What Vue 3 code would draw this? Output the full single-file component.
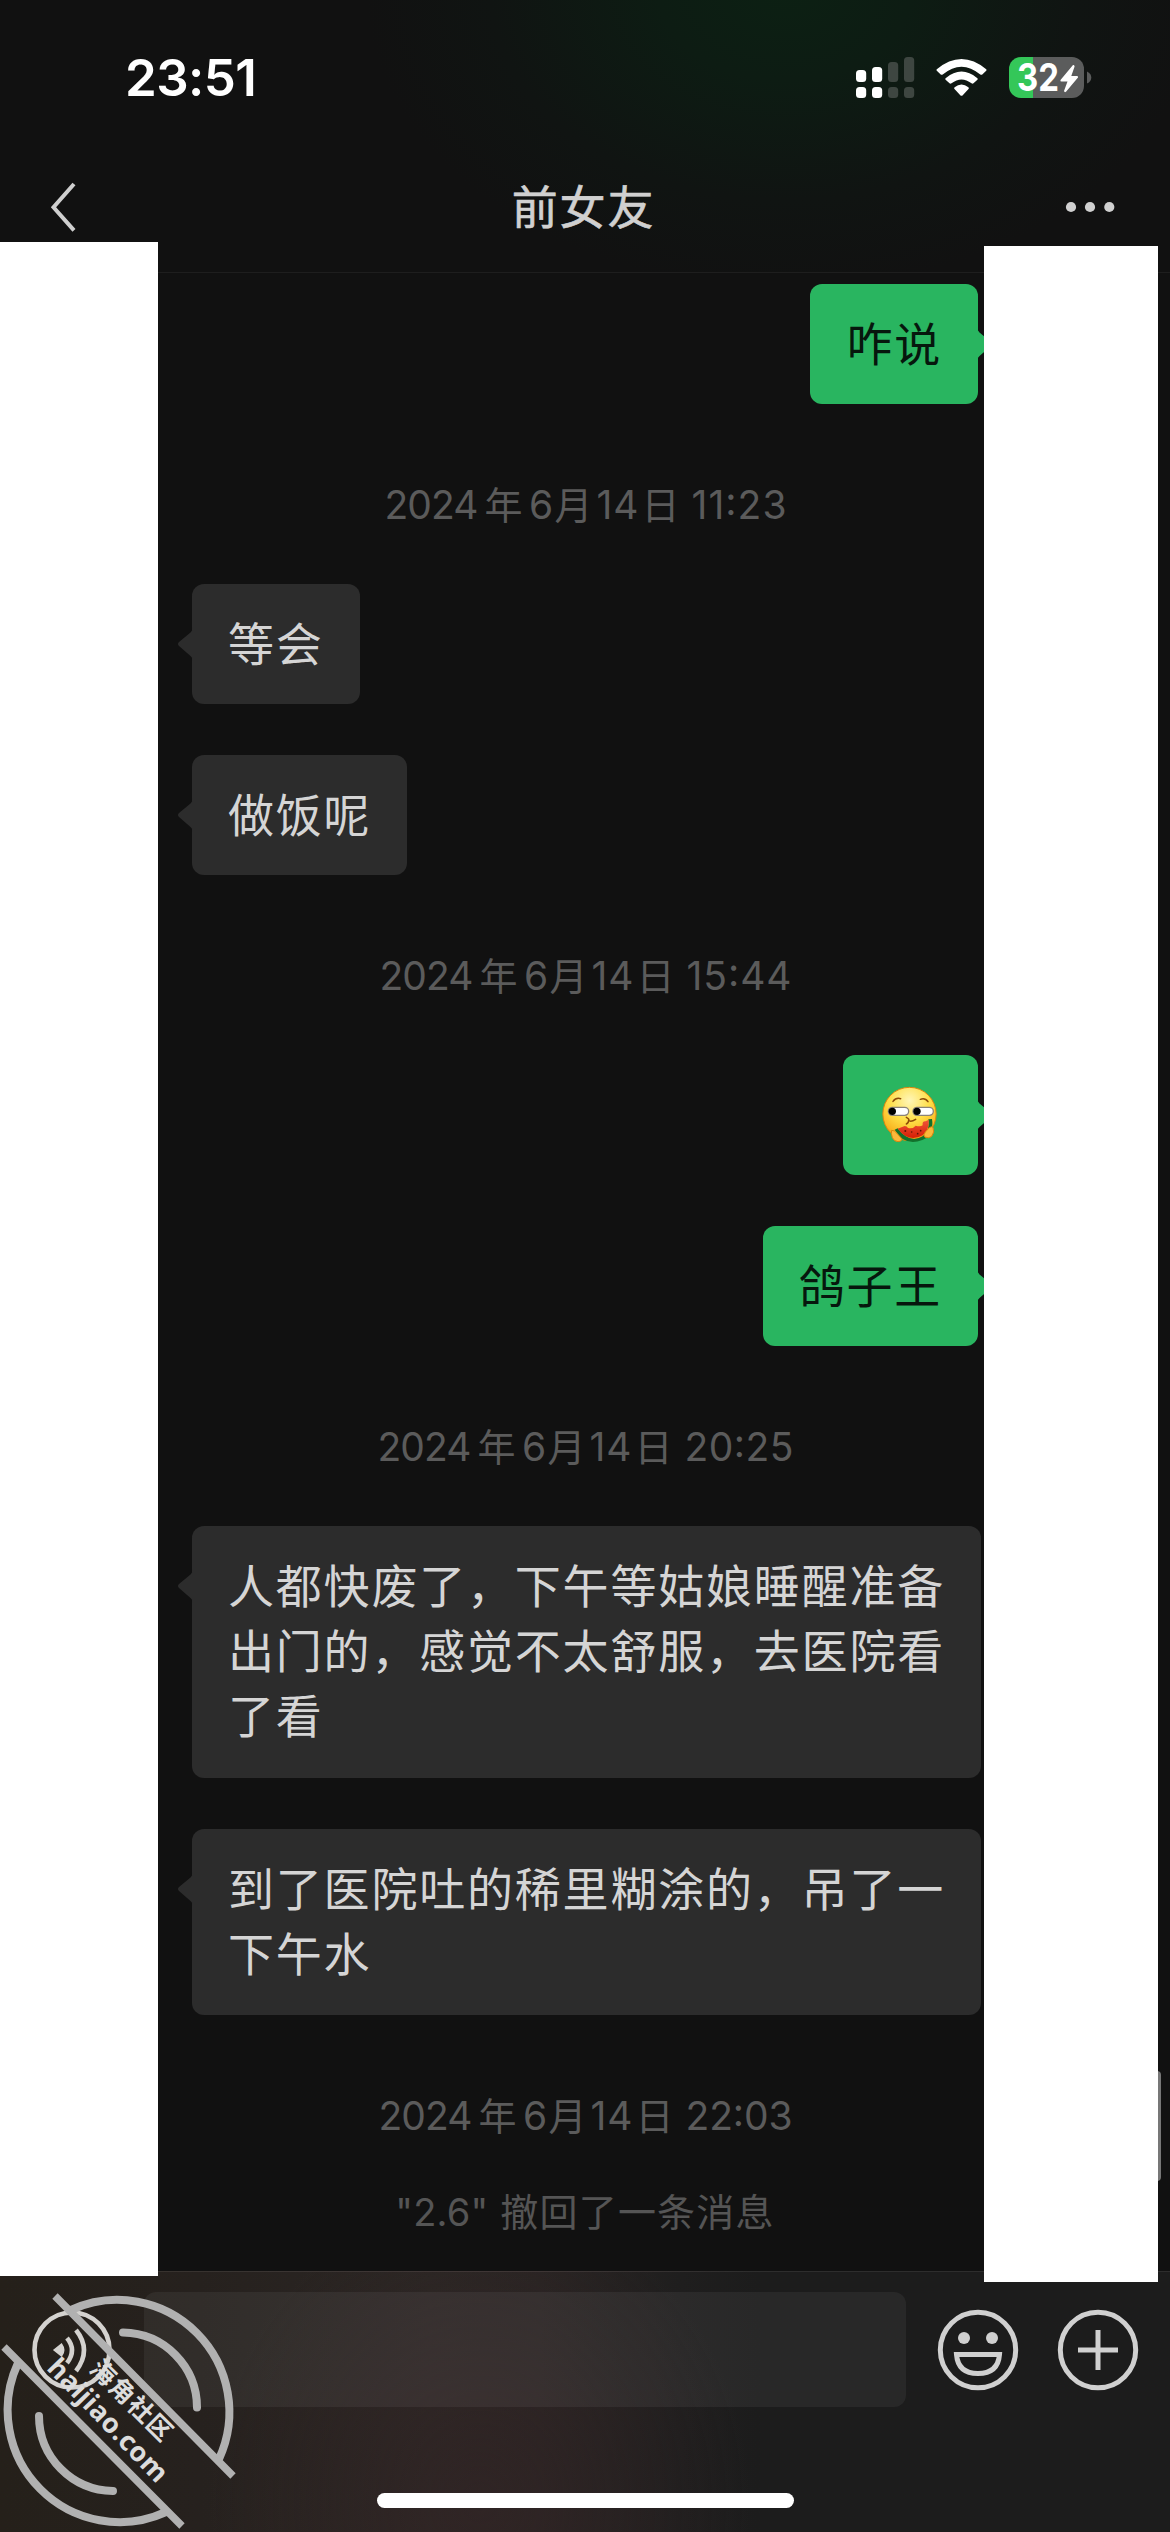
<script setup>
const items = [
  { type: 'out', lines: ['咋说'] },
  { type: 'time', clock: '11:23', width: 399 },
  { type: 'in', lines: ['等会'] },
  { type: 'in', lines: ['做饭呢'] },
  { type: 'time', clock: '15:44', width: 409 },
  { type: 'out', emoji: true },
  { type: 'out', lines: ['鸽子王'] },
  { type: 'time', clock: '20:25', width: 413 },
  { type: 'in', lines: ['人都快废了，下午等姑娘睡醒准备', '出门的，感觉不太舒服，去医院看', '了看'] },
  { type: 'in', lines: ['到了医院吐的稀里糊涂的，吊了一', '下午水'] },
  { type: 'time', clock: '22:03', width: 411 },
  { type: 'recall', name: '"2.6"', text: '撤回了一条消息' },
]
</script>

<template>
  <div class="phone">
    <header class="top">
      <div class="status">
        <span class="clock">23:51</span>
        <svg class="indicators" width="236" height="42" viewBox="856 57 236 42">
          <g fill="#fff">
            <rect x="856" y="70" width="10.2" height="12" rx="3.5" />
            <rect x="872" y="67" width="10.2" height="15" rx="3.5" />
            <rect x="856" y="87" width="10.2" height="11" rx="3.5" />
            <rect x="872" y="87" width="10.2" height="11" rx="3.5" />
          </g>
          <g fill="#3e4641">
            <rect x="888" y="62" width="10.2" height="20" rx="3.5" />
            <rect x="904" y="57" width="10.2" height="25" rx="3.5" />
            <rect x="888" y="87" width="10.2" height="11" rx="3.5" />
            <rect x="904" y="87" width="10.2" height="11" rx="3.5" />
          </g>
          <g fill="#fff">
            <path d="M936.8 69.2 Q961.5 48.8 986.2 69.2 Q987 70 986.2 70.8 L982.3 74.5 Q981.3 75.2 980.3 74.5 Q961.5 58.8 942.7 74.5 Q941.7 75.2 940.7 74.5 L936.8 70.8 Q936 70 936.8 69.2Z" />
            <path d="M945.6 78.2 Q961.5 65 977.4 78.2 Q978.2 79 977.4 79.8 L973.5 83.3 Q972.5 84 971.5 83.3 Q961.5 75.5 951.5 83.3 Q950.5 84 949.5 83.3 L945.6 79.8 Q944.8 79 945.6 78.2Z" />
            <path d="M954.6 87.3 Q961.5 81.8 968.4 87.3 Q969.4 88.2 968.5 89.1 L962.5 95.4 Q961.5 96.3 960.5 95.4 L954.5 89.1 Q953.6 88.2 954.6 87.3Z" />
          </g>
          <path d="M1021 57H1033V98H1021A12 12 0 0 1 1009 86V69A12 12 0 0 1 1021 57Z" fill="#34c759" />
          <path d="M1033 57H1072A12 12 0 0 1 1084 69V86A12 12 0 0 1 1072 98H1033Z" fill="#5b5c5c" />
          <path d="M1087 71.5Q1091.3 73.5 1091.3 77.5T1087 83.5Z" fill="#5b5c5c" />
          <text x="1017" y="91" class="level" textLength="42" lengthAdjust="spacingAndGlyphs">32</text>
          <path d="M1073 65L1060.5 80Q1060 81.5 1061.5 81.5H1067.5L1064 91Q1064.500 92.800 1066 91.800L1078 77.500Q1078.500 76 1077 76H1071.300L1074.600 66.500Q1074.500 64.500 1073 65Z" fill="#fff" />
        </svg>
      </div>
      <div class="nav">
        <svg class="back" width="30" height="56" viewBox="48 179 30 56">
          <path d="M74 184L53.500 207.300L74 230.300" fill="none" stroke="#cfcfcf" stroke-width="4" />
        </svg>
        <h1>前女友</h1>
        <svg class="more" width="50" height="12" viewBox="0 0 50 12" fill="#d0d0d0">
          <circle cx="6" cy="6" r="5.100" /><circle cx="25" cy="6" r="5.100" /><circle cx="44.300" cy="6" r="5.100" />
        </svg>
      </div>
    </header>

    <main class="chat">
      <template v-for="(m, i) in items" :key="i">
        <div v-if="m.type === 'time'" class="time">
          <svg :width="m.width" height="60">
            <text y="44"><tspan x="-1.500" textLength="94">2024</tspan><tspan class="han" x="98.500">年</tspan><tspan x="143">6</tspan><tspan class="han" x="168.500">月</tspan><tspan x="210.500" textLength="42">14</tspan><tspan class="han" x="255.500">日 </tspan><tspan x="305.500" :textLength="m.width - 304">{{ m.clock }}</tspan></text>
          </svg>
        </div>
        <p v-else-if="m.type === 'recall'" class="recall"><span>{{ m.name }}</span> {{ m.text }}</p>
        <div v-else class="row" :class="m.type">
          <div class="bubble" :class="m.emoji ? 'pic' : 'n' + m.lines.length">
            <svg class="tail" width="16" height="36" viewBox="0 0 16 36">
              <path d="M16 1Q16 4 13.500 6.500L2 16Q0 18 2 20L13.500 30Q16 32 16 35Z" />
            </svg>
            <svg v-if="m.emoji" class="face" width="57" height="58" viewBox="482 171 171 174">
              <defs>
                <radialGradient id="skin" cx=".5" cy=".25" r=".75">
                  <stop offset="0" stop-color="#fff6b8" />
                  <stop offset=".5" stop-color="#ffdf48" />
                  <stop offset=".85" stop-color="#f9b521" />
                  <stop offset="1" stop-color="#e98a12" />
                </radialGradient>
                <linearGradient id="melon" x1="0" y1="0" x2="0" y2="1">
                  <stop offset="0" stop-color="#f0553a" /><stop offset="1" stop-color="#d51f05" />
                </linearGradient>
              </defs>
              <circle cx="567.500" cy="255" r="80" fill="url(#skin)" stroke="#d9860f" stroke-width="3" />
              <g fill="none" stroke="#8d4a08" stroke-width="4.500" stroke-linecap="round">
                <path d="M518 217Q527 205 541 209" /><path d="M600 211Q614 205 623 218" />
                <path d="M558 265Q568 270 565 274Q571 280 586 271M565 274Q565 282 558 285" />
              </g>
              <g fill="#fff" stroke="#8b8377" stroke-width="4">
                <rect x="504" y="235" width="61" height="24" rx="12" />
                <rect x="578" y="235" width="61" height="24" rx="12" />
              </g>
              <circle cx="516" cy="247" r="11" /><circle cx="590" cy="247" r="11" />
              <path d="M523 302L532 298Q568 346 607 322Q629 306 624 271L635 270Q642 318 606 333Q552 353 523 302Z" fill="#12712c" />
              <path d="M532 299L553 291Q560 291 563 297Q577 301 586 290Q600 294 607 289Q605 276 616 277L625 272Q627 303 607 319Q565 342 532 299Z" fill="url(#melon)" />
              <g fill="#5c1607"><circle cx="555" cy="306" r="3" /><circle cx="574" cy="309" r="2.500" /><circle cx="592" cy="314" r="2.500" /><circle cx="601" cy="305" r="2.500" /></g>
              <g fill="#fbb93a" stroke="#d9860f" stroke-width="3">
                <path d="M514 304Q522 303 530 313L543 328Q548 337 533 338Q522 338 516 326Q511 312 514 304Z" />
                <path d="M638 295Q644 309 634 322Q626 330 613 324Q608 318 615 309L627 296Q634 291 638 295Z" />
              </g>
            </svg>
            <template v-else><span v-for="l in m.lines" :key="l" class="line">{{ l }}</span></template>
          </div>
        </div>
      </template>
    </main>

    <footer class="bottom">
      <div class="tools">
        <svg class="voice" width="80" height="82" viewBox="32 2309 80 82" fill="none" stroke="#d4d2cf" stroke-width="4.600">
          <circle cx="72" cy="2350" r="37.500" />
          <path d="M54.500 2350L61.500 2344.500Q65.500 2350 61.500 2355.500Z" fill="#d4d2cf" stroke-width="2" />
          <path d="M67 2338Q77 2350 67 2363M76 2330Q92 2350 76 2371" />
        </svg>
        <div class="field"></div>
        <svg class="smile" width="82" height="82" viewBox="-41 -41 82 82" fill="none" stroke="#d0d0d0" stroke-width="5">
          <circle r="37.700" />
          <path d="M-21.500 4.500H21.500Q20 23.500 0 23.500T-21.500 4.500Z" />
          <g fill="#d0d0d0" stroke="none"><circle cx="-14" cy="-12" r="6" /><circle cx="14" cy="-12" r="6" /></g>
        </svg>
        <svg class="plus" width="82" height="82" viewBox="-41 -41 82 82" fill="none" stroke="#d0d0d0" stroke-width="5">
          <circle r="37.700" />
          <path d="M-20 0H20M0 -20V20" />
        </svg>
      </div>
      <div class="home"></div>
    </footer>

    <i class="scroll"></i>
    <i class="mask left"></i>
    <i class="mask right"></i>
    <svg class="stamp" width="240" height="242" viewBox="0 2290 240 242">
      <g fill="none" stroke="#b1b1b1" stroke-width="8">
        <path d="M55 2296L233 2476M4 2347L182 2526" stroke-width="7.500" />
        <path d="M71 2310A112 112 0 0 1 219 2459" />
        <path d="M18 2363A112 112 0 0 0 166 2512" />
        <g stroke-linecap="round">
          <path d="M123 2332.500A75 75 0 0 1 197 2407.500" />
          <path d="M39 2416A75 75 0 0 0 113 2491" />
        </g>
      </g>
      <g fill="#dcdcdc" text-anchor="middle">
        <text class="cn" transform="translate(132 2400.500) rotate(44.500)" y="9">海角社区</text>
        <text class="en" transform="translate(107 2421) rotate(46)" y="8" textLength="160">haijiao.com</text>
      </g>
    </svg>
  </div>
</template>

<style>
body { margin: 0; background: #111; }
</style>

<style scoped>
.phone {
  position: relative;
  width: 1170px;
  height: 2532px;
  overflow: hidden;
  display: flex;
  flex-direction: column;
  background: #111;
  font-family: Inter, "Noto Sans CJK SC", sans-serif;
}
.top {
  box-sizing: border-box;
  height: 273px;
  flex: none;
  border-bottom: 1px solid #1e1e1e;
  background: radial-gradient(ellipse 420px 300px at 785px -10px, #0c2013 0%, #0d1c13 30%, #101412 70%, #111 100%);
}
.status { display: flex; justify-content: space-between; height: 142px; padding: 0 78px 0 125px; }
.clock { margin-top: 48px; font-size: 51px; line-height: 60px; font-weight: 600; color: #fff; letter-spacing: -0.6px; }
.indicators { margin-top: 57px; overflow: visible; }
.level { font: 700 38px Inter, sans-serif; fill: #fff; }
.nav { display: flex; align-items: center; justify-content: space-between; height: 130px; padding: 0 55px 0 48px; }
.nav h1 { margin: -6px 0 0 24px; font: 400 46px/66px "Noto Sans CJK SC", sans-serif; letter-spacing: 1.8px; color: #d0d0d0; -webkit-text-stroke: 0.6px #d0d0d0; }
.chat { flex: none; height: 1998px; box-sizing: border-box; padding: 11px 0 0; display: flex; flex-direction: column; }
.row { display: flex; padding: 0 189px 0 192px; margin-bottom: 51px; }
.out { justify-content: flex-end; padding-right: 192px; }
.bubble {
  position: relative;
  box-sizing: border-box;
  min-height: 120px;
  padding: 25px 36px 30px;
  border-radius: 12px;
  background: #2c2c2c;
  color: #d5d5d5;
}
.n2 { padding-bottom: 31px; }
.n3 { padding-bottom: 32px; }
.out .bubble { background: #29b560; color: #06170d; }
.line { display: block; height: 65px; font: 400 46px/65px "Noto Sans CJK SC", sans-serif; letter-spacing: 1.8px; white-space: nowrap; }
.pic { width: 135px; height: 120px; padding: 31px 38px; }
.face { display: block; }
.tail { position: absolute; left: -15px; top: 42px; fill: #2c2c2c; }
.out .tail { left: auto; right: -15px; fill: #29b560; transform: scaleX(-1); }
.time { height: 129px; flex: none; display: flex; justify-content: center; }
.time svg { margin-top: 20px; overflow: visible; }
.time text { font: 400 39px Inter, "Noto Sans CJK SC", sans-serif; fill: #5b5b5b; }
.time .han { font: 400 38px "Noto Sans CJK SC", sans-serif; }
.recall { margin: -13px 0 0; text-align: center; font-size: 38px; line-height: 60px; letter-spacing: 1.2px; color: #555; }
.recall span { letter-spacing: 0.2px; }
.bottom {
  flex: 1;
  box-sizing: border-box;
  border-top: 1px solid #ffffff14;
  background:
    radial-gradient(ellipse 270px 300px at 480px 230px, #33242599 0%, #33242500 100%),
    linear-gradient(90deg, #25201a 0, #26211e 200px, #2b2624 430px, #292423 540px, #1f1e1e 680px, #1c1c1c 760px);
}
.tools { display: flex; align-items: center; height: 115px; margin-top: 20px; padding: 0 31px 0 32px; }
.field { width: 762px; height: 115px; margin-left: 32px; border-radius: 12px; background: #ffffff0e; }
.smile { margin-left: 31px; }
.plus { margin-left: 38px; }
.home { width: 417px; height: 15px; margin: 86px 0 0 377px; border-radius: 8px; background: #fff; }
.mask { position: absolute; background: #fff; }
.left { left: 0; top: 242px; width: 158px; height: 2034px; }
.right { left: 984px; top: 246px; width: 174px; height: 2036px; }
.scroll { position: absolute; left: 1153px; top: 2071px; width: 8px; height: 110px; border-radius: 4px; background: #777; }
.stamp { position: absolute; left: 0; top: 2290px; }
.cn { font: 700 25px "Noto Sans CJK SC", sans-serif; letter-spacing: 1.200px; }
.en { font: 700 27px "Noto Sans", sans-serif; }
</style>
